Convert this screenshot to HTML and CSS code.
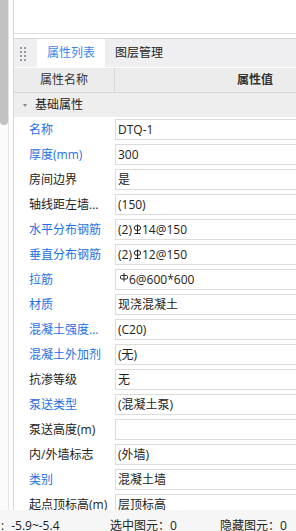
FILE: index.html
```html
<!DOCTYPE html>
<html>
<head>
<meta charset="utf-8">
<link rel="stylesheet" href="styles.css">
</head>
<body>
<div class="app">
  <div class="rail"><div class="thumb"></div></div>
  <div class="panel">
    <div class="topbox"></div>
    <div class="tabs">
      <div class="grip">
        <svg width="6" height="14" viewBox="0 0 6 14"><g fill="#9a9a9a"><rect x="0" y="0" width="2" height="2"/><rect x="4" y="0" width="2" height="2"/><rect x="0" y="4" width="2" height="2"/><rect x="4" y="4" width="2" height="2"/><rect x="0" y="8" width="2" height="2"/><rect x="4" y="8" width="2" height="2"/><rect x="0" y="12" width="2" height="2"/><rect x="4" y="12" width="2" height="2"/></g></svg>
      </div>
      <div class="tab active">属性列表</div>
      <div class="tab">图层管理</div>
    </div>
    <div class="thead">
      <div class="th name">属性名称</div>
      <div class="th value">属性值</div>
    </div>
    <div class="group"><span class="tri"></span>基础属性</div>
    <div class="rows">
      <div class="row"><div class="lbl blue">名称</div><div class="val">DTQ-1</div></div>
      <div class="row"><div class="lbl blue">厚度(mm)</div><div class="val">300</div></div>
      <div class="row"><div class="lbl">房间边界</div><div class="val">是</div></div>
      <div class="row"><div class="lbl">轴线距左墙...</div><div class="val">(150)</div></div>
      <div class="row"><div class="lbl blue">水平分布钢筋</div><div class="val">(2)<svg class="bar3" width="9" height="12" viewBox="0 0 9 12"><g fill="none" stroke="#222" stroke-width="1"><ellipse cx="4.5" cy="5" rx="3.3" ry="2.4"/><path d="M4.5 1.5V10.5M1.5 10.5H7.5"/></g></svg>14@150</div></div>
      <div class="row"><div class="lbl blue">垂直分布钢筋</div><div class="val">(2)<svg class="bar3" width="9" height="12" viewBox="0 0 9 12"><g fill="none" stroke="#222" stroke-width="1"><ellipse cx="4.5" cy="5" rx="3.3" ry="2.4"/><path d="M4.5 1.5V10.5M1.5 10.5H7.5"/></g></svg>12@150</div></div>
      <div class="row"><div class="lbl blue">拉筋</div><div class="val"><svg class="bar1" width="10" height="12" viewBox="0 0 10 12"><g fill="none" stroke="#222" stroke-width="1"><rect x="1.5" y="3.5" width="7" height="3.5" rx="1"/><path d="M5 1V9.5"/></g></svg>6@600*600</div></div>
      <div class="row"><div class="lbl blue">材质</div><div class="val">现浇混凝土</div></div>
      <div class="row"><div class="lbl blue">混凝土强度...</div><div class="val">(C20)</div></div>
      <div class="row"><div class="lbl blue">混凝土外加剂</div><div class="val">(无)</div></div>
      <div class="row"><div class="lbl">抗渗等级</div><div class="val">无</div></div>
      <div class="row"><div class="lbl blue">泵送类型</div><div class="val">(混凝土泵)</div></div>
      <div class="row"><div class="lbl">泵送高度(m)</div><div class="val"></div></div>
      <div class="row"><div class="lbl">内/外墙标志</div><div class="val">(外墙)</div></div>
      <div class="row"><div class="lbl blue">类别</div><div class="val">混凝土墙</div></div>
      <div class="row"><div class="lbl">起点顶标高(m)</div><div class="val">层顶标高</div></div>
    </div>
  </div>
</div>
<div class="status">
  <span class="s1"><span class="colon">:</span>-5.9~-5.4</span>
  <span class="s2">选中图元：0</span>
  <span class="s3">隐藏图元：0</span>
</div>
</body>
</html>
```
FILE: styles.css
```css
html, body {
  margin: 0;
  padding: 0;
}
body {
  width: 296px;
  height: 531px;
  overflow: hidden;
  background: #fff;
  font-family: "Open Sans", "Noto Sans CJK SC", sans-serif;
  font-size: 12px;
  color: #222;
}
.app {
  display: flex;
  height: 510px;
}
.rail {
  flex: none;
  width: 8px;
  margin-right: 4px;
  border-right: 1px solid #e4e4e4;
  background: #fbfbfb;
}
.thumb {
  height: 125px;
  background: #c2c2c2;
  border-radius: 0 0 4px 4px;
}
.panel {
  flex: 1;
  min-width: 0;
  border-left: 1px solid #d8d8d8;
  display: flex;
  flex-direction: column;
  overflow: hidden;
}
.topbox {
  flex: none;
  height: 33px;
  border-bottom: 1px solid #dcdcdc;
  margin-bottom: 4px;
}
.tabs {
  flex: none;
  display: flex;
  height: 28px;
  background: #efeff1;
  border-top: 1px solid #d8d8d8;
  border-bottom: 1px solid #fff;
}
.grip {
  width: 17px;
  padding-left: 6px;
  display: flex;
  align-items: center;
  padding-top: 1px;
}
.tab {
  line-height: 28px;
  padding: 0 10px;
  white-space: nowrap;
}
.tab.active {
  width: 48px;
  background: #fff;
  color: #3b87ee;
}
.thead {
  flex: none;
  display: flex;
  height: 24px;
  background: #ececec;
  border-bottom: 1px solid #d6d6d6;
  line-height: 24px;
  color: #333;
}
.th {
  flex: none;
  text-align: center;
  white-space: nowrap;
}
.th.name {
  width: 100px;
  border-right: 1px solid #d6d6d6;
}
.th.value {
  width: 280px;
  font-weight: bold;
}
.group {
  flex: none;
  height: 24px;
  line-height: 24px;
  background: #eeeeee;
  display: flex;
  align-items: center;
  padding-left: 9px;
  color: #222;
}
.tri {
  width: 0;
  height: 0;
  border-left: 2px solid transparent;
  border-right: 2px solid transparent;
  border-top: 3px solid #888;
  margin-right: 8px;
}
.rows {
  flex: 1;
  overflow: hidden;
}
.row {
  display: flex;
  height: 25px;
}
.lbl {
  flex: none;
  width: 86px;
  padding-left: 15px;
  line-height: 25px;
  white-space: nowrap;
  overflow: hidden;
}
.lbl.blue {
  color: #1f6fe6;
}
.val {
  flex: none;
  width: 280px;
  height: 19px;
  margin-top: 2px;
  padding-left: 2px;
  line-height: 19px;
  background: #fff;
  border: 1px solid #dcdcdc;
  border-right: none;
  white-space: nowrap;
}
.bar3 {
  vertical-align: -1px;
  margin: 0 0 0 1px;
}
.bar1 {
  vertical-align: 0px;
  margin-left: 1px;
}
.status {
  height: 21px;
  background: #f6f6f6;
  display: grid;
  grid-template-columns: 110px 110px auto;
  padding-top: 8px;
  line-height: 16px;
  box-sizing: border-box;
  white-space: nowrap;
}
.s1 {
  padding-left: 1px;
}
.colon {
  margin-right: 7px;
}
```
